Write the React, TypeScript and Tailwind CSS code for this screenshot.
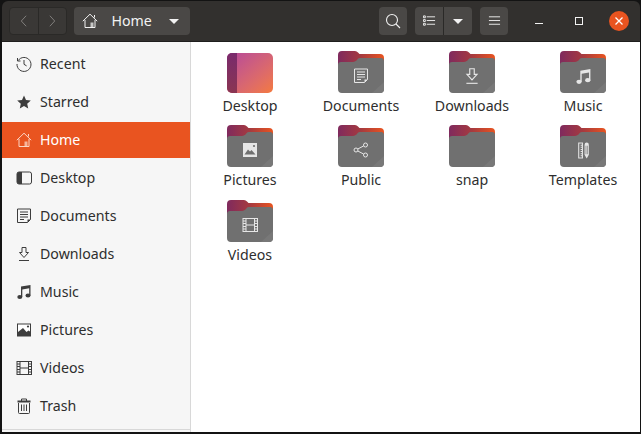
import type { ReactNode } from "react";

const FONT = "font-['Noto_Sans','Open_Sans',sans-serif]";

// small symbolic icons, 16x16 grid
function Sym({ name, className, inFolder }: { name: string; className?: string; inFolder?: boolean }) {
  const common = {
    viewBox: "0 0 16 16",
    fill: "none",
    stroke: "currentColor",
    strokeWidth: 1,
    className,
  };
  switch (name) {
    case "recent":
      return (
        <svg {...common}>
          <path d="M2.2 4.5A7 7 0 1 1 1 8" />
          <path d="M1.5 2v3h3" />
          <path d="M8 4v4.3l2.6 1.6" />
        </svg>
      );
    case "star":
      return (
        <svg {...common} fill="currentColor" stroke="none">
          <path d="M8 1.5l2 4.5 4.8.5-3.6 3.2 1 4.8L8 12.1l-4.2 2.4 1-4.8L1.2 6.5 6 6z" />
        </svg>
      );
    case "home":
      return (
        <svg {...common}>
          <path d="M.8 8.2L8 1.2l7.2 7" />
          <path d="M12.5 4.5V2" />
          <path d="M3 7v7.5h10V7" />
          <path d="M8.5 14.5V9.5h3v5" fill="currentColor" stroke="none" opacity={0.75} />
        </svg>
      );
    case "desktop":
      return (
        <svg {...common}>
          <rect x="1" y="2" width="14.500" height="12" rx="2" />
          <path d="M1 4a2 2 0 0 1 2-2h3v12H3a2 2 0 0 1-2-2z" fill="currentColor" stroke="none" />
        </svg>
      );
    case "documents":
      return (
        <svg {...common}>
          <path d="M1.500 1h13v10.500l-3 3h-10z" />
          <path d="M4 4h8M4 6.500h8M4 9h8M4 11.500h4" />
          <path d="M14.500 11.500h-3v3z" fill="currentColor" stroke="none" />
        </svg>
      );
    case "downloads":
      return (
        <svg {...common}>
          <path d="M6 1.500h4v5h2.500L8 11.500 3.500 6.500H6z" />
          <path d="M3 14.500h10" />
        </svg>
      );
    case "music":
      return (
        <svg {...common} fill="currentColor" stroke="none">
          <path d="M5 2.500L14.500 1v10.500h-1.300V4.300L6.300 5.400V13H5z" />
          <ellipse cx="3.800" cy="13" rx="2.500" ry="2" />
          <ellipse cx="12" cy="11.500" rx="2.500" ry="2" />
        </svg>
      );
    case "pictures":
      return inFolder ? (
        <svg {...common} stroke="none">
          <rect x="1" y="1" width="14" height="14" fill="currentColor" />
          <path d="M2.500 12.500L6 7.500l2 2 1.500-1.500 4 4.500z" fill="#6f6f6f" />
          <circle cx="12" cy="4" r="1.100" fill="#6f6f6f" />
        </svg>
      ) : (
        <svg {...common} stroke="none">
          <rect x="1" y="1.500" width="14" height="13" fill="currentColor" />
          <path d="M2 2.500h12v7l-1.500-1-2 1.500L7 6 2 10z" fill="#fff" />
          <circle cx="12" cy="4.500" r="1.100" fill="currentColor" />
        </svg>
      );
    case "videos":
      return (
        <svg {...common}>
          <rect x="1" y="1.500" width="14.500" height="13" />
          <path d="M4 1.500v13M12.500 1.500v13M4 8h8.500" />
          <path d="M1 4h3M1 6.500h3M1 9.500h3M1 12h3M12.500 4h3M12.500 6.500h3M12.500 9.500h3M12.500 12h3" />
        </svg>
      );
    case "trash":
      return (
        <svg {...common}>
          <path d="M1.500 3.500h13" strokeWidth="2" />
          <path d="M5.500 3V1h5v2" />
          <path d="M2.500 5v9.500a1 1 0 0 0 1 1h9a1 1 0 0 0 1-1V5" />
          <path d="M5.500 6.500v6.500M8 6.500v6.500M10.500 6.500v6.500" />
        </svg>
      );
    case "share":
      return (
        <svg {...common}>
          <circle cx="3" cy="8" r="2" />
          <circle cx="12.500" cy="3" r="2" />
          <circle cx="12.500" cy="13" r="2" />
          <path d="M4.800 7l5.900-3.100M4.800 9l5.900 3.100" />
        </svg>
      );
    case "templates":
      return (
        <svg {...common} stroke="none">
          <rect x="3" y="0.500" width="4.500" height="15" fill="currentColor" />
          <path d="M4 1.500h2.500v1H5.300v1h1.200v1H5.300v1h1.200v1H5.300v1h1.200v1H5.300v1h1.200v1H5.300v1h1.200v1H5.300v1h1.200v1H4z" fill="#6f6f6f" />
          <path d="M9 2.500a2 2 0 0 1 4 0V12l-2 3.500L9 12z" fill="currentColor" />
          <path d="M10.300 3.500v8M11.700 3.500v8" stroke="#6f6f6f" strokeWidth="0.600" />
        </svg>
      );
    default:
      return null;
  }
}

const SIDEBAR = [
  { name: "Recent", icon: "recent" },
  { name: "Starred", icon: "star" },
  { name: "Home", icon: "home" },
  { name: "Desktop", icon: "desktop" },
  { name: "Documents", icon: "documents" },
  { name: "Downloads", icon: "downloads" },
  { name: "Music", icon: "music" },
  { name: "Pictures", icon: "pictures" },
  { name: "Videos", icon: "videos" },
  { name: "Trash", icon: "trash" },
];

const FOLDERS = [
  { name: "Desktop" },
  { name: "Documents", icon: "documents", size: "w-[16px] h-[16px]" },
  { name: "Downloads", icon: "downloads", size: "w-[18px] h-[18px]" },
  { name: "Music", icon: "music", size: "w-[17px] h-[17px]" },
  { name: "Pictures", icon: "pictures", size: "w-[16px] h-[16px]" },
  { name: "Public", icon: "share", size: "w-[16px] h-[16px]" },
  { name: "snap" },
  { name: "Templates", icon: "templates", size: "w-[17px] h-[17px]" },
  { name: "Videos", icon: "videos", size: "w-[16px] h-[16px]" },
];

function Folder({ icon, size, gradientId }: { icon?: string; size?: string; gradientId: string }) {
  return (
    <div className="relative w-[46px] h-[42px]">
      <svg viewBox="0 0 46 42" className="absolute inset-0 w-full h-full">
        <defs>
          <linearGradient id={gradientId} x1="0" y1="0" x2="1" y2="0">
            <stop offset="0" stopColor="#7f2a5e" />
            <stop offset="0.5" stopColor="#a63a3f" />
            <stop offset="1" stopColor="#e95420" />
          </linearGradient>
        </defs>
        <path d="M0 4a4 4 0 0 1 4-4h13a4 4 0 0 1 3 1.500l1.500 1.500H42a4 4 0 0 1 4 4v12H0z" fill={`url(#${gradientId})`} />
        <path d="M0 14a3 3 0 0 1 3-3h12a5 5 0 0 0 3.500-1.500l1-1.200a3 3 0 0 1 2.500-1.300h21a3 3 0 0 1 3 3v28a4 4 0 0 1-4 4H4a4 4 0 0 1-4-4z" fill="#707070" />
        <path d="M46 31v7a4 4 0 0 1-4 4h-8z" fill="#787878" />
      </svg>
      {icon && (
        <div className="absolute inset-x-0 top-[8px] bottom-0 flex items-center justify-center text-[#e6e6e6]">
          <Sym name={icon} className={size} inFolder />
        </div>
      )}
    </div>
  );
}

function DesktopTile() {
  return (
    <div className="w-[46px] h-[40px] mt-[2px] rounded-[5px] overflow-hidden flex bg-gradient-to-br from-[#b5459a] to-[#f47a3c]">
      <div className="w-[10px] bg-gradient-to-b from-[#7a2a6c] to-[#8a3552]" />
    </div>
  );
}

function HeaderBtn({ children, className }: { children: ReactNode; className?: string }) {
  return (
    <div className={`h-[28px] bg-[#4a4846] rounded-[4px] flex items-center justify-center ${className ?? ""}`}>
      {children}
    </div>
  );
}

function Caret() {
  return <div className="w-0 h-0 border-x-[5px] border-x-transparent border-t-[5px] border-t-[#f2f2f2]" />;
}

export default function App() {
  return (
    <div className={`w-[641px] h-[434px] bg-[#131313] pl-[2px] pr-[1px] pt-[1px] pb-[2px] overflow-hidden flex flex-col ${FONT}`}>
      <header className="h-[41px] shrink-0 bg-[#32302e] border-b border-[#1f1e1d] rounded-t-[6px] flex items-center pl-[6.500px] pr-[1px] text-[#f2f2f2]">
        <div className="flex w-[58px] h-[28px] rounded-[4px] bg-[#3a3836] border border-[#2a2927] mr-[7px]">
          <div className="w-[29px] flex items-center justify-center border-r border-[#2a2927]">
            <svg viewBox="0 0 8 14" className="w-[7px] h-[14px] text-[#8a8886]" fill="none" stroke="currentColor"><path d="M7 1L1.500 7 7 13" /></svg>
          </div>
          <div className="flex-1 flex items-center justify-center">
            <svg viewBox="0 0 8 14" className="w-[7px] h-[14px] text-[#8a8886]" fill="none" stroke="currentColor"><path d="M1 1l5.500 6L1 13" /></svg>
          </div>
        </div>
        <HeaderBtn className="w-[116px] pl-[8px] pr-[11px] !justify-start">
          <Sym name="home" className="w-[16px] h-[16px]" />
          <span className="text-[14.200px] ml-[14px]">Home</span>
          <div className="ml-auto"><Caret /></div>
        </HeaderBtn>
        <div className="flex-1" />
        <HeaderBtn className="w-[28px]">
          <svg viewBox="0 0 16 16" className="w-[16px] h-[16px]" fill="none" stroke="currentColor" strokeWidth="1.100"><circle cx="7" cy="7" r="5.500" /><path d="M11 11l4 4" /></svg>
        </HeaderBtn>
        <div className="flex ml-[8px] h-[28px] w-[57px] rounded-[4px] bg-[#4a4846]">
          <div className="w-[29px] flex items-center justify-center border-r border-[#2a2927]">
            <svg viewBox="0 0 14 12" className="w-[13px] h-[12px]" fill="none" stroke="currentColor">
              <path d="M.500.500h2v2h-2zM.500 4.500h2v2h-2zM.500 8.500h2v2h-2zM4 1.500h9M4 5.500h9M4 9.500h9" />
            </svg>
          </div>
          <div className="flex-1 flex items-center justify-center"><Caret /></div>
        </div>
        <HeaderBtn className="w-[28px] ml-[8px]">
          <svg viewBox="0 0 14 12" className="w-[13px] h-[12px]" fill="none" stroke="currentColor"><path d="M1 1.500h12M1 5.500h12M1 9.500h12" /></svg>
        </HeaderBtn>
        <div className="w-[40px] ml-[11px] flex justify-center"><div className="w-[8px] h-[1px] mt-[5px] bg-[#f2f2f2]" /></div>
        <div className="w-[40px] flex justify-center"><div className="w-[8px] h-[8px] border border-[#f2f2f2]" /></div>
        <div className="w-[40px] flex justify-center">
          <div className="w-[20px] h-[20px] rounded-full bg-[#e95420] flex items-center justify-center">
            <svg viewBox="0 0 8 8" className="w-[8px] h-[8px]" stroke="#fff" strokeWidth="1.300"><path d="M.500.500l7 7M7.500.500l-7 7" /></svg>
          </div>
        </div>
      </header>
      <div className="flex-1 flex min-h-0">
        <aside className="w-[189px] shrink-0 bg-[#f6f6f6] border-r border-[#d8d8d8] flex flex-col gap-[2px] pt-[4px]">
          {SIDEBAR.map((item) => (
            <div
              key={item.name}
              className={`h-[36px] shrink-0 flex items-center pl-[14px] text-[14.200px] ${item.name === "Home" ? "bg-[#e95420] text-white" : "text-[#2e2e2e]"}`}
            >
              <Sym name={item.icon} className={`w-[16px] h-[16px] ${item.name === "Home" ? "text-[#fbd5c5]" : "text-[#3d3d3d]"}`} />
              <span className="ml-[8px]">{item.name}</span>
            </div>
          ))}
          <div className="mt-auto mb-[2px] h-[1px] bg-[#d8d8d8]" />
        </aside>
        <main className="flex-1 bg-white pl-[3.500px] pt-[9px]">
          <div className="grid grid-cols-[111px_111px_111px_111px] grid-rows-[74px_75px_75px] text-[14.200px] text-[#2e2e2e]">
            {FOLDERS.map((f, i) => (
              <div key={f.name} className="flex flex-col items-center">
                {f.name === "Desktop" ? <DesktopTile /> : <Folder icon={f.icon} size={f.size} gradientId={`fold${i}`} />}
                <span className="mt-[3px] leading-[20px]">{f.name}</span>
              </div>
            ))}
          </div>
        </main>
      </div>
    </div>
  );
}
